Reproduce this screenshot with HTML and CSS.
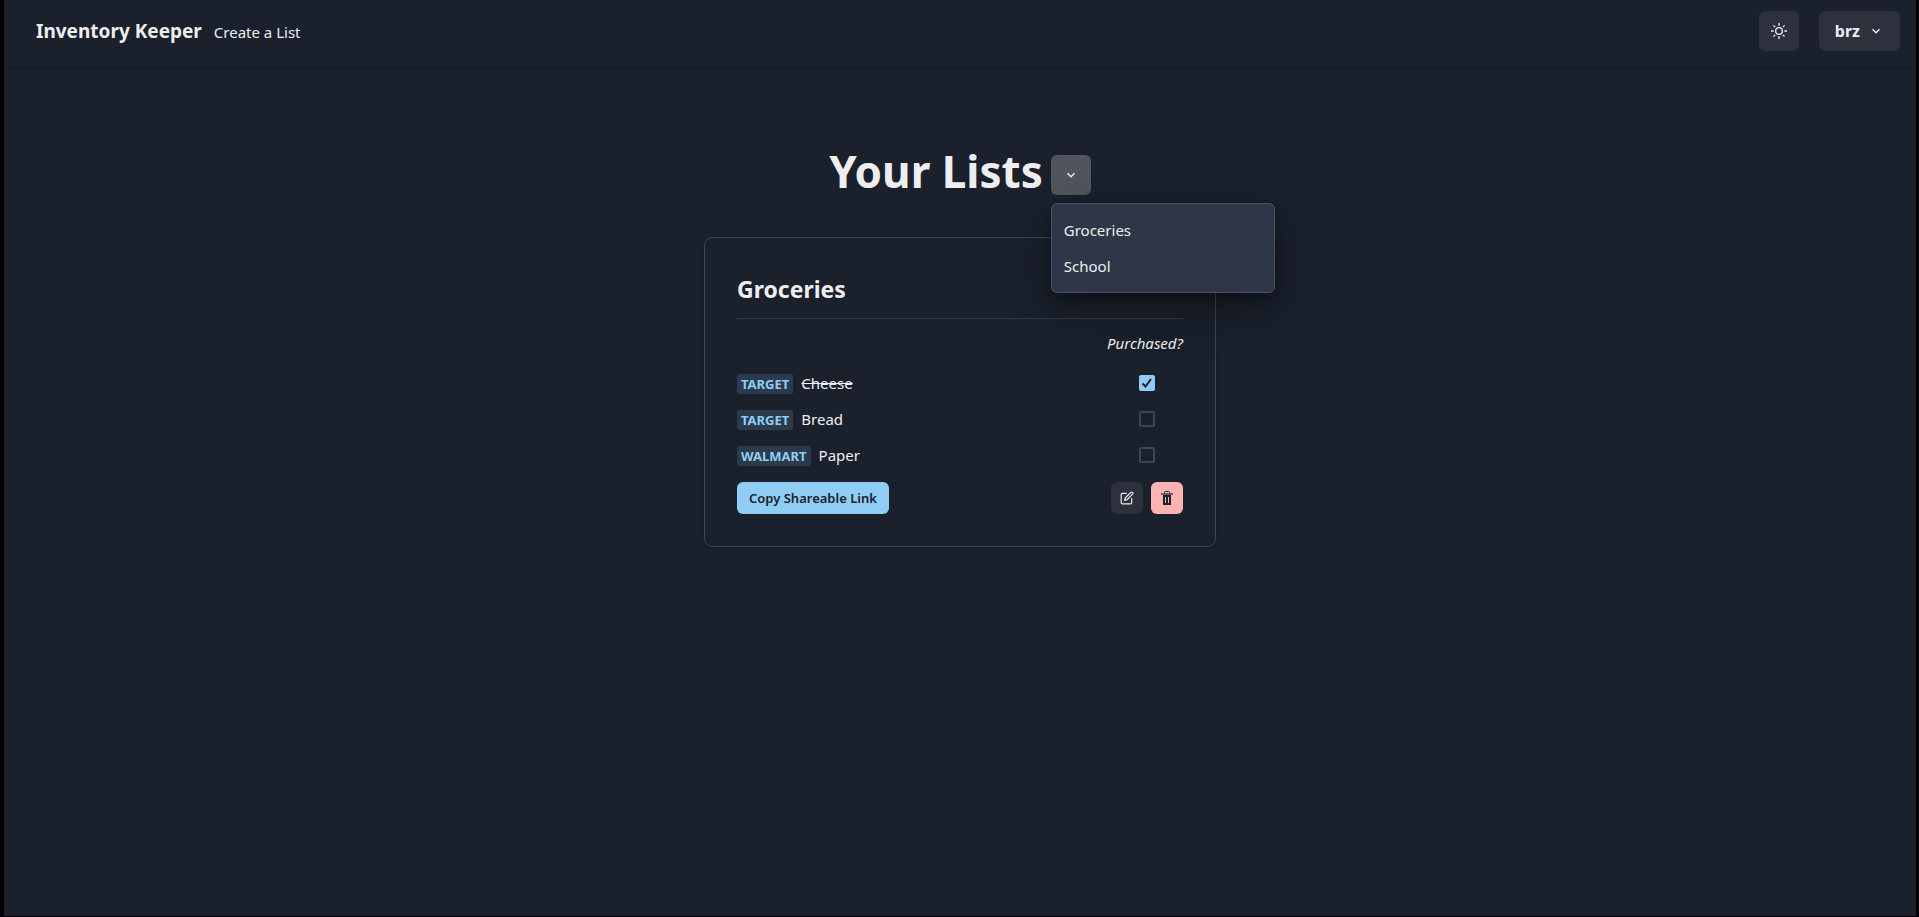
FILE: index.html
```html
<!DOCTYPE html>
<html lang="en">
<head>
<meta charset="utf-8">
<meta name="viewport" content="width=device-width, initial-scale=1">
<title>Inventory Keeper</title>
<link rel="stylesheet" href="styles.css">
</head>
<body>
<div class="app">
  <header class="navbar">
    <nav class="nav-links">
      <a class="brand" href="#">Inventory Keeper</a>
      <a class="nav-link" href="#">Create a List</a>
    </nav>
    <div class="nav-actions">
      <button class="btn btn-icon" type="button" aria-label="Toggle color mode">
        <svg class="icon" viewBox="0 0 24 24" fill="none" stroke="currentColor" stroke-width="2"><circle cx="12" cy="12" r="5"/><path d="M12 0v4M12 20v4M0 12h4M20 12h4M3.6 3.6l2.6 2.6M17.8 17.8l2.6 2.6M3.6 20.4l2.6-2.6M17.8 6.2l2.6-2.6"/></svg>
      </button>
      <button class="btn btn-user" type="button">brz
        <svg class="icon" viewBox="0 0 24 24" fill="currentColor"><path d="M16.59 8.59 12 13.17 7.41 8.59 6 10l6 6 6-6z"/></svg>
      </button>
    </div>
  </header>
  <main class="page">
    <div class="title-row">
      <h1 class="title">Your Lists</h1>
      <div class="menu-anchor">
        <button class="btn btn-icon btn-open" type="button" aria-label="Choose a list" aria-expanded="true">
          <svg class="icon" viewBox="0 0 24 24" fill="currentColor"><path d="M16.59 8.59 12 13.17 7.41 8.59 6 10l6 6 6-6z"/></svg>
        </button>
        <div class="menu" role="menu">
          <button class="menu-item" type="button" role="menuitem">Groceries</button>
          <button class="menu-item" type="button" role="menuitem">School</button>
        </div>
      </div>
    </div>
    <section class="card">
      <h2 class="card-title">Groceries</h2>
      <table class="items">
        <thead>
          <tr><th class="purchased" colspan="2">Purchased?</th></tr>
        </thead>
        <tbody>
          <tr>
            <td><label class="item" for="cheese"><span class="badge">TARGET</span><s>Cheese</s></label></td>
            <td class="check-cell"><input class="check" id="cheese" type="checkbox" checked></td>
          </tr>
          <tr>
            <td><label class="item" for="bread"><span class="badge">TARGET</span><span>Bread</span></label></td>
            <td class="check-cell"><input class="check" id="bread" type="checkbox"></td>
          </tr>
          <tr>
            <td><label class="item" for="paper"><span class="badge">WALMART</span><span>Paper</span></label></td>
            <td class="check-cell"><input class="check" id="paper" type="checkbox"></td>
          </tr>
        </tbody>
      </table>
      <div class="card-actions">
        <button class="btn-small btn-copy" type="button">Copy Shareable Link</button>
        <button class="btn-small btn-edit" type="button" aria-label="Edit list">
          <svg class="icon-small" viewBox="0 0 24 24" fill="none" stroke="currentColor" stroke-width="2" stroke-linecap="round" stroke-linejoin="round"><path d="M11 4H4a2 2 0 0 0-2 2v14a2 2 0 0 0 2 2h14a2 2 0 0 0 2-2v-7"/><path d="M18.500 2.500a2.120 2.120 0 0 1 3 3L12 15l-4 1 1-4z"/></svg>
        </button>
        <button class="btn-small btn-delete" type="button" aria-label="Delete list">
          <svg class="icon-small" viewBox="0 0 14 14"><path d="M4.500 2.500V1.500a1 1 0 0 1 1-1h3a1 1 0 0 1 1 1v1" fill="none" stroke="currentColor"/><path d="M1 2h12v2H1z" fill="currentColor" opacity=".6"/><path fill="currentColor" fill-rule="evenodd" d="M3 4h8v9.500a.5.5 0 0 1-.5.5h-7a.5.5 0 0 1-.5-.5zM5 6v6h1v-6zM8 6v6h1v-6z"/></svg>
        </button>
      </div>
    </section>
  </main>
</div>
</body>
</html>
```
FILE: styles.css
```css
*, *::before, *::after { box-sizing: border-box; }

body {
  display: flex;
  min-height: 100vh;
  margin: 0;
  padding: 0 3px 1px 4px;
  background: #000;
  color: #eeeeef;
  font: 15px/24px "Segoe UI", "Noto Sans", "Open Sans", sans-serif;
}

button { border: 0; margin: 0; color: inherit; font: inherit; cursor: pointer; }
a { color: inherit; text-decoration: none; }

.app {
  flex: 1;
  background: #1a202c;
}

.navbar {
  display: flex;
  align-items: center;
  justify-content: space-between;
  padding: 11px 16px 16px 32px;
  box-shadow: 0 1px 2px rgba(0, 0, 0, .1);
}
.nav-links { display: flex; align-items: baseline; gap: 12px; }
.brand { font-size: 19px; font-weight: 700; line-height: 26px; }
.nav-actions { display: flex; gap: 20px; }

.btn {
  display: flex;
  align-items: center;
  justify-content: center;
  height: 40px;
  border-radius: 6px;
  background: #2c313d;
}
.btn-icon { width: 40px; padding: 0; }
.btn-user { gap: 8px; padding: 0 16px; font-size: 16px; font-weight: 700; }
.btn-open { background: #50555d; }
.icon { width: 16px; height: 16px; }
.icon-small { width: 14px; height: 14px; }

.page { padding: 80px 16px 0; }

.title-row {
  display: flex;
  align-items: flex-end;
  justify-content: center;
  gap: 8px;
  margin-bottom: 42px;
}
.title { margin: 0; font-size: 44px; line-height: 48px; font-weight: 700; }
.menu-anchor { position: relative; }

.menu {
  position: absolute;
  top: 48px;
  left: 0;
  width: 224px;
  padding: 8px 0;
  border: 1px solid #4a5160;
  border-radius: 6px;
  background: #2d3748;
  box-shadow: 0 5px 10px rgba(0, 0, 0, .2), 0 15px 40px rgba(0, 0, 0, .4);
}
.menu-item {
  display: block;
  width: 100%;
  padding: 6px 12px;
  background: none;
  text-align: left;
}

.card {
  max-width: 512px;
  margin: 0 auto;
  padding: 32px;
  border: 1px solid #3f444e;
  border-radius: 8px;
  box-shadow: 0 1px 3px rgba(0, 0, 0, .15);
}
.card-title {
  margin: 0;
  padding-bottom: 10px;
  border-bottom: 1px solid #343a45;
  font-size: 23px;
  line-height: 38px;
  font-weight: 700;
}

.items { width: 100%; border-collapse: collapse; }
.items td { height: 36px; padding: 0; vertical-align: middle; }
.purchased { padding: 12px 0 10px; text-align: right; font-weight: 400; font-style: italic; }
.items .check-cell { width: 72px; text-align: center; }
.item { display: flex; align-items: center; gap: 8px; }
.badge {
  margin-top: 2px;
  padding: 0 4px;
  border-radius: 2px;
  background: #2c3b4c;
  color: #90cdf4;
  font-size: 13px;
  line-height: 20px;
  font-weight: 700;
}

.check {
  appearance: none;
  display: block;
  width: 16px;
  height: 16px;
  margin: 0 auto;
  border: 2px solid #41454f;
  border-radius: 2px;
}
.check:checked {
  border-color: #90cdf4;
  background: #90cdf4 url("data:image/svg+xml,%3Csvg xmlns='http://www.w3.org/2000/svg' viewBox='0 0 12 12'%3E%3Cpath d='M1.500 6.500 4.500 9.500 10 2' fill='none' stroke='%231a202c' stroke-width='2'/%3E%3C/svg%3E") center / 12px no-repeat;
}

.card-actions { display: flex; gap: 8px; margin-top: 9px; }
.btn-small {
  display: flex;
  align-items: center;
  justify-content: center;
  width: 32px;
  height: 32px;
  padding: 0;
  border-radius: 6px;
}
.btn-copy {
  width: auto;
  margin-right: auto;
  padding: 0 12px;
  background: #90cdf4;
  color: #1a202c;
  font-size: 13px;
  font-weight: 600;
}
.btn-edit { background: #2c313d; }
.btn-delete { background: #feb2b2; color: #1a202c; }
```
